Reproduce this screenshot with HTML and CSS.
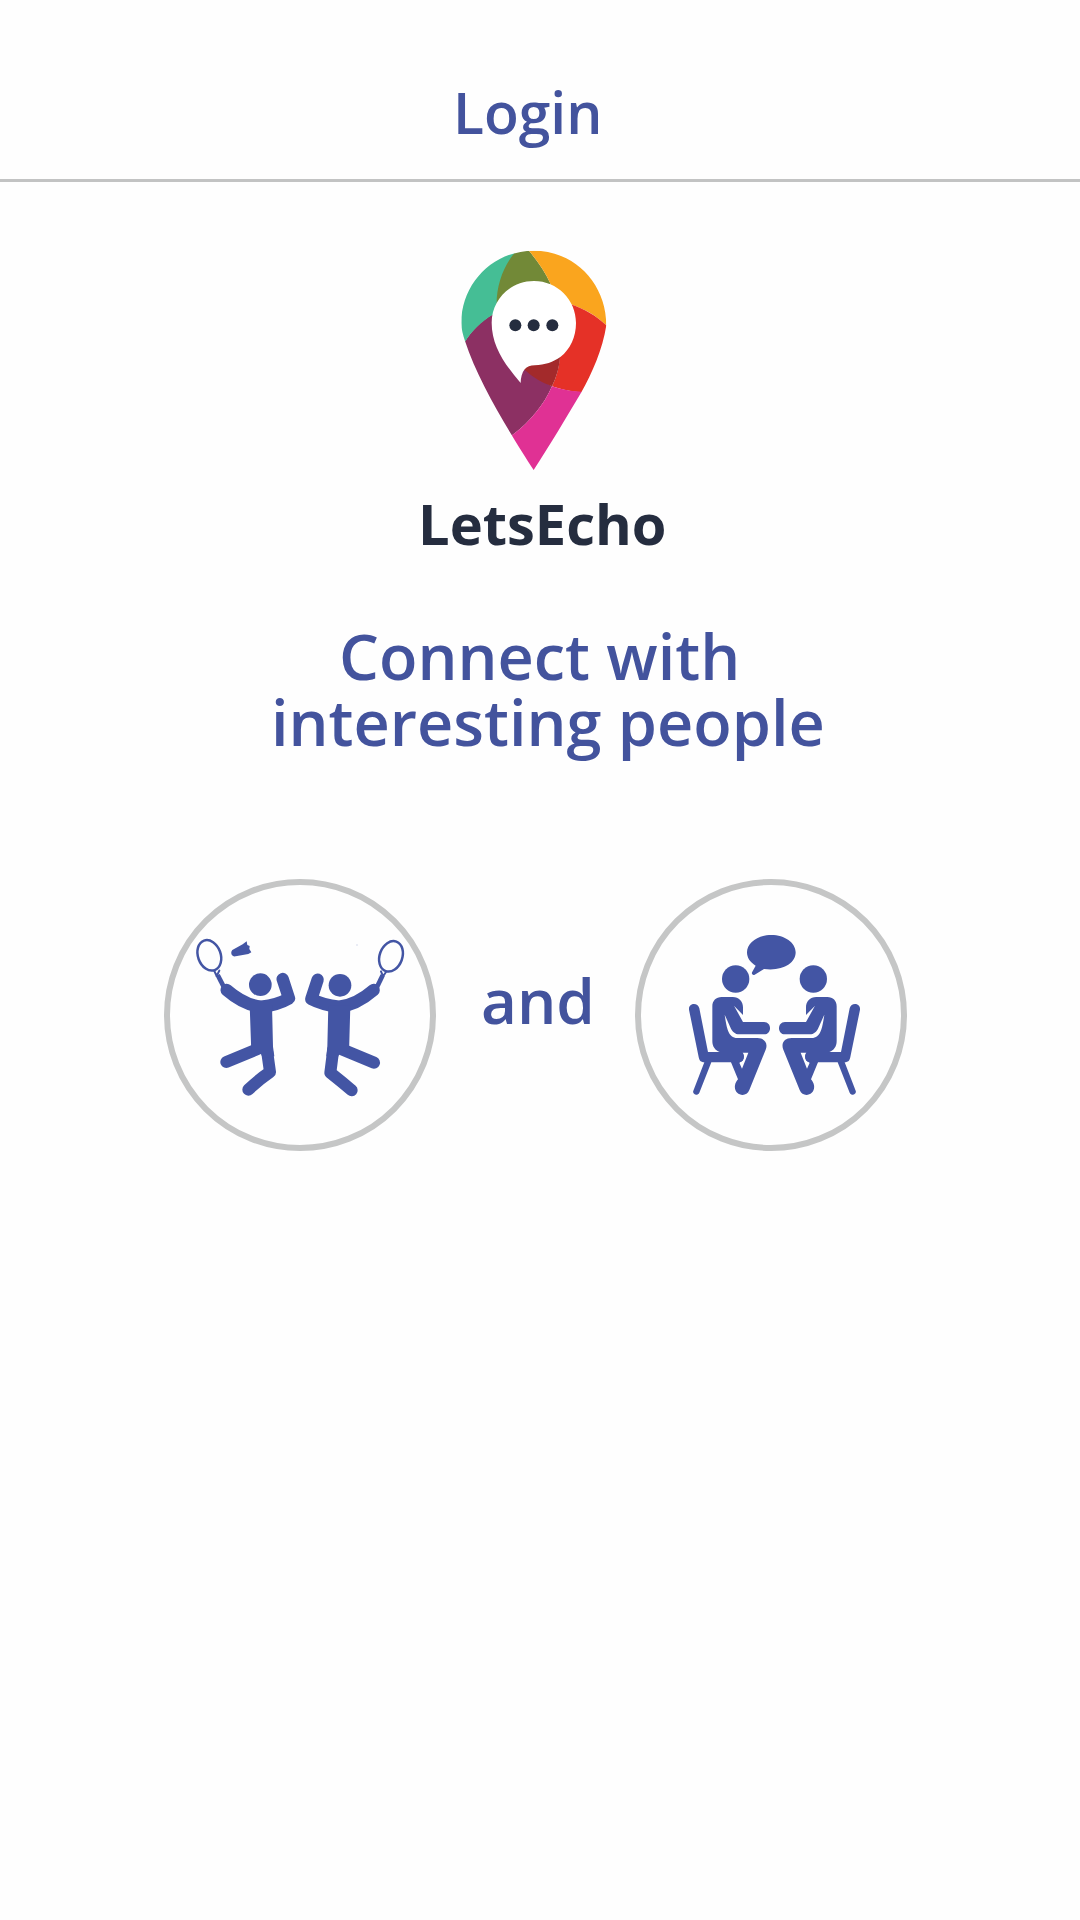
FILE: index.html
```html
<!DOCTYPE html>
<html lang="en">
<head>
<meta charset="utf-8">
<title>LetsEcho – Login</title>
<link rel="stylesheet" href="styles.css">
</head>
<body>
<header class="header"><h1 class="title">Login</h1></header>
<main class="main">
  <svg class="logo" viewBox="0 0 570 720" aria-hidden="true">
    <defs><clipPath id="pin"><path d="M281 690C221 597 117 433 75 303C69 285 64 268 64 249C64 129 161 32 281 32C402 32 499 129 499 256C488 328 456 400 424 457C376 538 332 612 281 690Z"/></clipPath></defs>
    <g clip-path="url(#pin)">
      <path fill="#8c3063" d="M0 304H75C96 270 125 242 160 222L250 385L336 439C312 494 272 544 217 585L100 620Z"/>
      <path fill="#45be95" d="M0 0H224V225H157C124 245 96 272 75 305L0 320Z"/>
      <path fill="#728937" d="M224 0H268V34Q309 82 332 132V200H170C168 140 188 82 224 38Z"/>
      <path fill="#faa51e" d="M268 34V0H570V256H499C466 225 437 209 398 195L332 150V132Q309 82 268 34Z"/>
      <path fill="#e53127" d="M390 192C437 209 466 225 499 256H570V457H419C388 453 362 448 336 439Q358 394 360 345Z"/>
      <path fill="#a32a2b" d="M252 388L256 360L361 345Q358 394 336 439Q291 424 252 388Z"/>
      <path fill="#e03194" d="M217 585C272 544 312 494 336 439C362 448 388 453 424 455L530 500L281 720L190 605Z"/>
    </g>
    <path fill="#fff" d="M242 429C242 414 246 398 254 388C261 379 271 377 284 376C315 375 340 366 361 351C391 328 408 290 408 249C408 179 352 123 282 123C211 123 155 179 155 248C155 318 194 373 242 429Z"/>
    <g fill="#252d3f"><circle cx="226" cy="256" r="18"/><circle cx="281" cy="256" r="18"/><circle cx="337" cy="256" r="18"/></g>
  </svg>
  <p class="brand">LetsEcho</p>
  <p class="tagline"><span class="line line-first">Connect with</span><span class="line line-second">interesting people</span></p>
  <div class="activities">
    <div class="circle">
      <svg class="picture" viewBox="60 45 780 780" aria-hidden="true">
        <g fill="none" stroke="#4355a4" stroke-linecap="round" stroke-linejoin="round">
          <ellipse cx="178" cy="256" rx="34" ry="47" stroke-width="7.5" transform="rotate(-20 178 256)"/>
          <path stroke-width="6" d="M193 303L200 318L208 302"/>
          <path stroke-width="14" stroke-linecap="butt" d="M203 315L221 350"/>
          <ellipse cx="723" cy="259" rx="34" ry="47" stroke-width="7.5" transform="rotate(20 723 259)"/>
          <path stroke-width="6" d="M693 304L699 319L708 306"/>
          <path stroke-width="14" stroke-linecap="butt" d="M698 316L681 351"/>
          <path stroke-width="37" d="M230 360Q283 406 334 410Q383 405 417 385L398 327"/>
          <path stroke-width="37" d="M671 360Q618 406 567 410Q518 405 484 387L503 329"/>
          <path stroke-width="36" d="M229 576L323 537M350 535L360 606Q325 630 295 659"/>
          <path stroke-width="36" d="M672 578L578 539M550 537L541 608Q573 633 605 661"/>
        </g>
        <g fill="#4355a4">
          <circle cx="331" cy="344" r="34"/><circle cx="570" cy="346" r="34"/>
          <path d="M299 405L366 405L369 530L373 559L339 565L333 552L304 548Z"/>
          <path d="M601 407L535 407L532 530L529 559L562 565L567 554L597 550Z"/>
          <path d="M247 240L278 223L290 214L292 225L299 228L298 237L304 247L295 252L257 259C245 261 240 248 247 240Z"/>
          <circle cx="621" cy="225" r="2" opacity=".3"/>
        </g>
      </svg>
    </div>
    <span class="and">and</span>
    <div class="circle">
      <svg class="picture" viewBox="63 45 780 780" aria-hidden="true">
        <defs>
          <g id="seated">
            <circle cx="347" cy="327" r="41"/>
            <path d="M305 381H338C357 381 369 394 369 412V435L342 407L369 456H432C456 456 456 493 432 493H358C345 493 337 484 333 476L314 434C320 472 324 504 352 504H412C433 504 445 519 437 539L388 660C378 686 340 675 345 646C346 638 350 633 354 628L333 577H274L238 668C232 680 216 673 220 662L253 577C242 576 238 572 236 561L207 419C205 398 234 396 238 415L264 546H299C285 541 277 529 277 513V409C277 392 288 381 305 381ZM368 548C373 553 373 563 368 572L358 578L366 596L385 548Z" fill-rule="evenodd"/>
            <path d="M333 546H360C375 550 376 572 359 577H333Z"/>
          </g>
        </defs>
        <g fill="#4355a4">
          <path d="M454 195C494 195 527 218 527 247C527 280 488 304 432 297L404 314C398 317 393 311 397 305L407 287C390 277 381 263 381 247C381 218 414 195 454 195Z"/>
          <use href="#seated"/><use href="#seated" transform="translate(927 0) scale(-1 1)"/>
        </g>
      </svg>
    </div>
  </div>
</main>
</body>
</html>
```
FILE: styles.css
```css
* { box-sizing: border-box; }
body {
  margin: 0;
  min-height: 1920px;
  background: #fefefe;
  color: #43539d;
  font-family: "Open Sans", "Noto Sans", sans-serif;
  font-weight: 600;
}
h1, p { margin: 0; }
.header {
  height: 182px;
  padding: 82px 0 0 453px;
  border-bottom: 3px solid #c2c3c3;
}
.title { font-size: 57px; line-height: 60px; font-weight: 600; }
.main { display: flex; flex-direction: column; align-items: flex-start; }
.logo { width: 190px; height: 240px; margin: 58px 0 0 440px; }
.brand {
  margin: 13px 0 0 418px;
  color: #252d3f;
  font-size: 56px;
  line-height: 60px;
  font-weight: 700;
}
.tagline { margin-top: 70px; font-size: 63px; line-height: 66px; white-space: nowrap; }
.line { display: block; }
.line-first { padding-left: 339px; }
.line-second { padding-left: 271px; }
.activities { display: flex; width: 100%; padding-left: 164px; margin-top: 124px; }
.circle {
  flex: none;
  width: 272px;
  height: 272px;
  border: 6px solid #c5c6c6;
  border-radius: 50%;
}
.picture { display: block; width: 260px; height: 260px; }
.and { width: 199px; padding: 88px 0 0 45px; font-size: 62px; line-height: 66px; }
```
